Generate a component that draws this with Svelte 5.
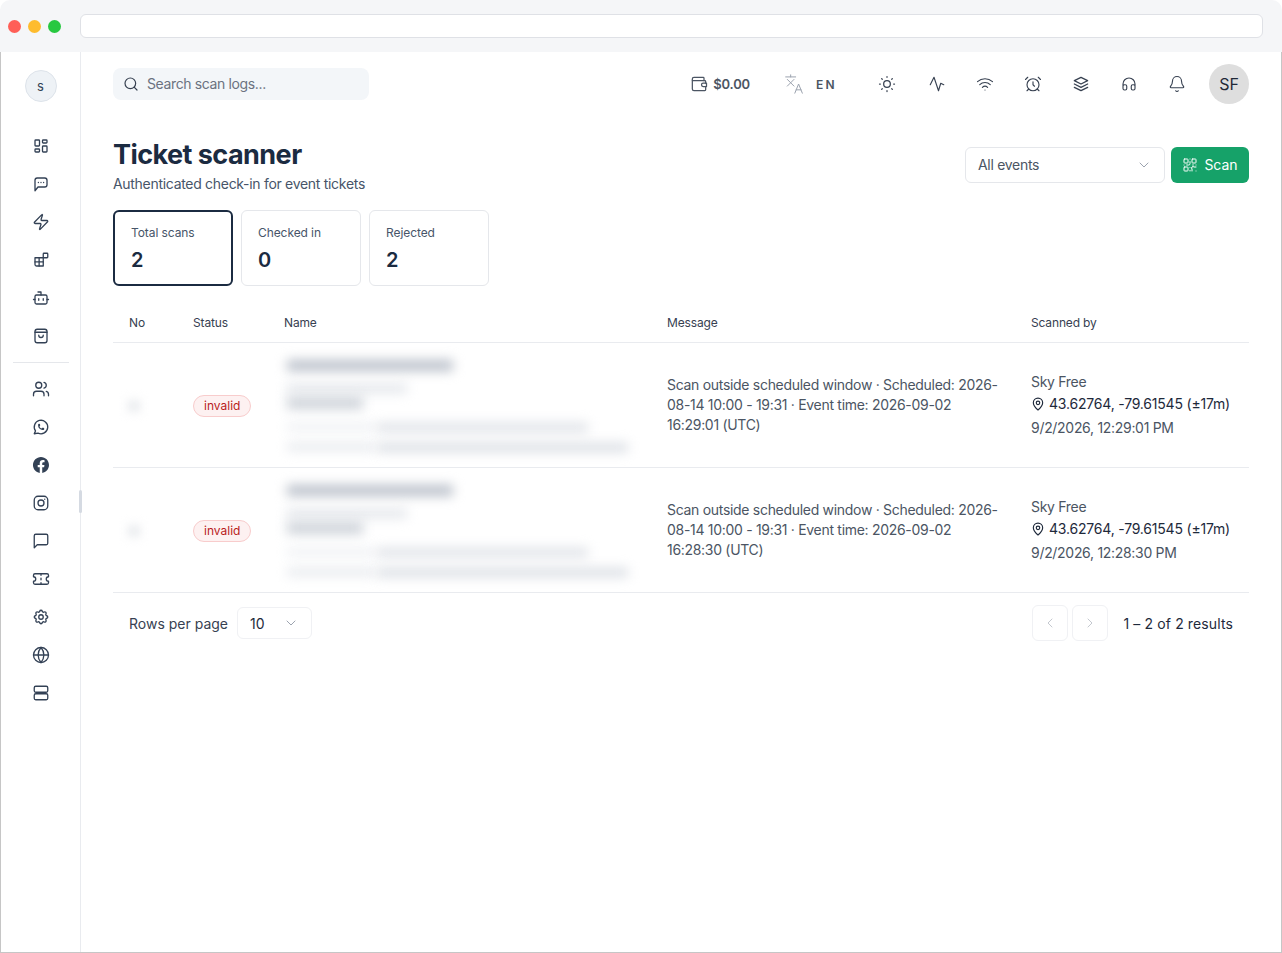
<script>
  const P = {
    dash: '<rect x="4" y="4" width="6" height="8" rx="1"/><rect x="4" y="16" width="6" height="4" rx="1"/><rect x="14" y="12" width="6" height="8" rx="1"/><rect x="14" y="4" width="6" height="4" rx="1"/>',
    chat: '<path d="M4 21V7a3 3 0 0 1 3-3h10a3 3 0 0 1 3 3v6a3 3 0 0 1-3 3H8z"/><path d="M8.5 10h.01M12 10h.01M15.5 10h.01"/>',
    zap: '<path d="M4 14a1 1 0 0 1-.78-1.63l9.9-10.2a.5.5 0 0 1 .86.46l-1.92 6.02A1 1 0 0 0 13 10h7a1 1 0 0 1 .78 1.63l-9.9 10.2a.5.5 0 0 1-.86-.46l1.92-6.02A1 1 0 0 0 11 14z"/>',
    apps: '<path d="M4 9h11v11H6a2 2 0 0 1-2-2z"/><path d="M9.5 9v11M4 14.5h11"/><rect x="15" y="3" width="6" height="6" rx="1"/>',
    bot: '<path d="M12 8V4H8"/><rect x="4" y="8" width="16" height="12" rx="2"/><path d="M2 14h2M20 14h2M15 13v2M9 13v2"/>',
    bag: '<rect x="4" y="3" width="16" height="18" rx="3"/><path d="M4 7h16M9 11a3 3 0 0 0 6 0"/>',
    users: '<path d="M16 21v-2a4 4 0 0 0-4-4H6a4 4 0 0 0-4 4v2"/><circle cx="9" cy="7" r="4"/><path d="M22 21v-2a4 4 0 0 0-3-3.87"/><path d="M16 3.13a4 4 0 0 1 0 7.75"/>',
    wa: '<path d="M3 21l1.65-3.8a9 9 0 1 1 3.4 2.9L3 21"/><path d="M9 10a.5.5 0 0 0 1 0V9a.5.5 0 0 0-1 0v1a5 5 0 0 0 5 5h1a.5.5 0 0 0 0-1h-1a.5.5 0 0 0 0 1"/>',
    fb: '<g transform="translate(1.3 1.3) scale(.89)"><path fill="currentColor" stroke="none" d="M24 12.07C24 5.41 18.63 0 12 0S0 5.4 0 12.07C0 18.1 4.39 23.09 10.13 24v-8.44H7.08v-3.49h3.04V9.41c0-3.02 1.8-4.7 4.54-4.7 1.31 0 2.68.24 2.68.24v2.97h-1.5c-1.5 0-1.96.93-1.96 1.89v2.26h3.32l-.53 3.5h-2.8V24C19.62 23.1 24 18.1 24 12.07"/></g>',
    ig: '<rect x="3" y="3" width="18" height="18" rx="5"/><circle cx="12" cy="12" r="4"/><path d="M17 7h.01"/>',
    msg: '<path d="M21 15a2 2 0 0 1-2 2H7l-4 4V5a2 2 0 0 1 2-2h14a2 2 0 0 1 2 2z"/>',
    ticket: '<path d="M2 9a3 3 0 0 1 0 6v2a2 2 0 0 0 2 2h16a2 2 0 0 0 2-2v-2a3 3 0 0 1 0-6V7a2 2 0 0 0-2-2H4a2 2 0 0 0-2 2Z"/><path d="M12 5v2M12 11v2M12 17v2"/>',
    gear: '<path d="M10.325 4.317c.426-1.756 2.924-1.756 3.35 0a1.724 1.724 0 0 0 2.573 1.066c1.543-.94 3.31.826 2.37 2.37a1.724 1.724 0 0 0 1.065 2.572c1.756.426 1.756 2.924 0 3.35a1.724 1.724 0 0 0-1.066 2.573c.94 1.543-.826 3.31-2.37 2.37a1.724 1.724 0 0 0-2.572 1.065c-.426 1.756-2.924 1.756-3.35 0a1.724 1.724 0 0 0-2.573-1.066c-1.543.94-3.31-.826-2.37-2.37a1.724 1.724 0 0 0-1.065-2.572c-1.756-.426-1.756-2.924 0-3.35a1.724 1.724 0 0 0 1.066-2.573c-.94-1.543.826-3.31 2.37-2.37 1 .608 2.296.07 2.572-1.065z"/><circle cx="12" cy="12" r="3"/>',
    globe: '<circle cx="12" cy="12" r="10"/><path d="M2 12h20"/><path d="M12 2a15 15 0 0 1 0 20 15 15 0 0 1 0-20"/>',
    server: '<rect x="3" y="3" width="18" height="8" rx="2"/><rect x="3" y="13" width="18" height="8" rx="2"/>',
    search: '<circle cx="11" cy="11" r="8"/><path d="m21 21-4.3-4.3"/>',
    wallet: '<path d="M18 8V5a1 1 0 0 0-1-1H6a2 2 0 0 0-2 2v12a2 2 0 0 0 2 2h13a1 1 0 0 0 1-1v-3"/><path d="M4 7.5A1 1 0 0 0 5 8h14a1 1 0 0 1 1 1v2"/><path d="M21 11h-4a2 2 0 0 0 0 4h4z"/>',
    lang: '<path d="M2 3.5h12M8 1v2.5M4 6.5l8 8M12 6.5l-8 8"/><path d="M13 23l4.5-11 4.5 11M14.6 19h5.8"/>',
    sun: '<circle cx="12" cy="12" r="4"/><path d="M3 12h1M12 3v1M20 12h1M12 20v1M5.6 5.6l.7.7M18.4 5.6l-.7.7M17.7 17.7l.7.7M6.3 17.7l-.7.7"/>',
    pulse: '<path d="M3 13 8 3l6 18 3-10 4 2"/>',
    wifi: '<path d="M12 20h.01M2 8.82a15 15 0 0 1 20 0M5 12.86a10 10 0 0 1 14 0M8.5 16.43a5 5 0 0 1 7 0"/>',
    alarm: '<circle cx="12" cy="13" r="8"/><path d="M12 9v4l2 2M5 3 2 6M22 6l-3-3M6.38 18.7 4 21M17.64 18.67 20 21"/>',
    layers: '<path d="M12 4 4 8l8 4 8-4-8-4M4 12l8 4 8-4M4 16l8 4 8-4"/>',
    head: '<path d="M4 15a2 2 0 0 1 2-2h1a2 2 0 0 1 2 2v3a2 2 0 0 1-2 2H6a2 2 0 0 1-2-2zM15 15a2 2 0 0 1 2-2h1a2 2 0 0 1 2 2v3a2 2 0 0 1-2 2h-1a2 2 0 0 1-2-2zM4 15v-3a8 8 0 0 1 16 0v3"/>',
    bell: '<path d="M10.268 21a2 2 0 0 0 3.464 0M3.262 15.326A1 1 0 0 0 4 17h16a1 1 0 0 0 .74-1.673C19.41 13.956 18 12.499 18 8A6 6 0 0 0 6 8c0 4.499-1.411 5.956-2.738 7.326"/>',
    chev: '<path d="m6 9 6 6 6-6"/>',
    left: '<path d="m15 18-6-6 6-6"/>',
    right: '<path d="m9 18 6-6-6-6"/>',
    qr: '<rect x="3" y="3" width="6" height="6" rx="1"/><rect x="15" y="3" width="6" height="6" rx="1"/><rect x="3" y="15" width="6" height="6" rx="1"/><path d="M21 15h-3a2 2 0 0 0-3 3v3M21 21v.01M12 7v3a2 2 0 0 1-2 2H7M3 12h.01M12 3h.01M12 16v.01M16 12h1M21 12v.01M12 21v-1"/>',
    pin: '<path d="M20 10c0 4.993-5.539 10.193-7.399 11.799a1 1 0 0 1-1.202 0C9.539 20.193 4 14.993 4 10a8 8 0 0 1 16 0"/><circle cx="12" cy="10" r="3"/>'
  };
  const navTop = ['dash', 'chat', 'zap', 'apps', 'bot', 'bag'];
  const navBottom = ['users', 'wa', 'fb', 'ig', 'msg', 'ticket', 'gear', 'globe', 'server'];
  const tools = [['sun', 20], ['pulse', 18], ['wifi', 18], ['alarm', 18], ['layers', 20], ['head', 18], ['bell', 18]];
  const stats = [
    { label: 'Total scans', value: 2, active: true },
    { label: 'Checked in', value: 0 },
    { label: 'Rejected', value: 2 }
  ];
  const rows = [
    { time: '16:29:01', date: '9/2/2026, 12:29:01 PM' },
    { time: '16:28:30', date: '9/2/2026, 12:28:30 PM' }
  ];
</script>

{#snippet icon(name, size = 18, sw = 1.6)}
  <svg width={size} height={size} viewBox="0 0 24 24" fill="none" stroke="currentColor" stroke-width={sw} stroke-linecap="round" stroke-linejoin="round">{@html P[name]}</svg>
{/snippet}

<div class="win">
  <header class="chrome">
    <div class="dots"><i class="red"></i><i class="yellow"></i><i class="green"></i></div>
    <div class="address"></div>
  </header>

  <div class="shell">
    <aside class="side">
      <div class="logo">S</div>
      <nav class="nav top">
        {#each navTop as n}<span class="nav-item">{@render icon(n, 18, 1.75)}</span>{/each}
      </nav>
      <div class="divider"></div>
      <nav class="nav">
        {#each navBottom as n}<span class="nav-item">{@render icon(n, 18, 1.75)}</span>{/each}
      </nav>
      <div class="thumb"></div>
    </aside>

    <main class="main">
      <div class="topbar">
        <div class="search">
          <span class="search-icon">{@render icon('search', 16, 1.8)}</span>
          <span class="nudge">Search scan logs...</span>
        </div>
        <div class="top-right">
          <div class="wallet">{@render icon('wallet', 20, 1.5)}<span>$0.00</span></div>
          <div class="lang"><span class="lang-icon">{@render icon('lang', 20, 1.2)}</span><span>EN</span></div>
          <div class="tools">
            {#each tools as [t, s]}<span class="tool">{@render icon(t, s, 1.5)}</span>{/each}
          </div>
          <div class="avatar">SF</div>
        </div>
      </div>

      <div class="head">
        <div>
          <h1>Ticket scanner</h1>
          <p>Authenticated check-in for event tickets</p>
        </div>
        <div class="actions">
          <div class="select events"><span class="nudge">All events</span><span class="chev">{@render icon('chev', 16, 1.5)}</span></div>
          <div class="scan">{@render icon('qr', 16, 1.5)}<span class="nudge">Scan</span></div>
        </div>
      </div>

      <div class="stats">
        {#each stats as s}
          <div class="stat" class:active={s.active}>
            <div class="label">{s.label}</div>
            <div class="value">{s.value}</div>
          </div>
        {/each}
      </div>

      <div class="table">
        <div class="row thead">
          <div>No</div><div>Status</div><div>Name</div><div>Message</div><div>Scanned by</div>
        </div>
        {#each rows as r}
          <div class="row tr">
            <div><div class="blur-no"></div></div>
            <div><span class="badge">invalid</span></div>
            <div class="blurred">
              <div class="b b1"></div>
              <div class="b b2"></div>
              <div class="b b3"></div>
              <div class="b b4"></div>
              <div class="b b4b"></div>
              <div class="b b5"></div>
              <div class="b b5b"></div>
            </div>
            <div class="msg">Scan outside scheduled window · Scheduled: 2026-08-14 10:00 - 19:31 · Event time: 2026-09-02 {r.time} (UTC)</div>
            <div class="by">
              <div>Sky Free</div>
              <div class="geo">{@render icon('pin', 14, 2)}<span>43.62764, -79.61545 (±17m)</span></div>
              <div class="date">{r.date}</div>
            </div>
          </div>
        {/each}
      </div>

      <div class="foot">
        <div class="per">
          <span>Rows per page</span>
          <div class="select small"><span>10</span><span class="chev">{@render icon('chev', 16, 1.5)}</span></div>
        </div>
        <div class="pager">
          <span class="pg">{@render icon('left', 16, 1.5)}</span>
          <span class="pg">{@render icon('right', 16, 1.5)}</span>
          <span class="res">1 – 2 of 2 results</span>
        </div>
      </div>
    </main>
  </div>
</div>

<style>
  :global(body) { margin: 0; background: #fff; }
  * { box-sizing: border-box; }
  .win {
    width: 1282px; height: 953px; display: flex; flex-direction: column;
    font-family: Inter, "Liberation Sans", sans-serif; color: #1e293b; overflow: hidden;
  }
  .chrome {
    height: 52px; flex: none; background: #f5f6f8; display: flex; align-items: center;
    padding: 0 19px 0 8px; border-radius: 10px 10px 0 0;
  }
  .dots { display: flex; gap: 7px; width: 72px; flex: none; }
  .dots i { width: 13px; height: 13px; border-radius: 50%; display: block; }
  .red { background: #ff5f57; } .yellow { background: #febc2e; } .green { background: #28c840; }
  .address { flex: 1; height: 24px; background: #fff; border: 1px solid #dfe1e6; border-radius: 6px; }
  .nudge { padding-bottom: 2px; }

  .shell {
    flex: 1; display: flex; min-height: 0;
    border-left: 1px solid #c6c6c6; border-right: 1px solid #c6c6c6; border-bottom: 1px solid #c6c6c6;
  }
  .side {
    width: 80px; flex: none; border-right: 1px solid #e9ebef; position: relative;
    display: flex; flex-direction: column; align-items: center; padding-top: 18px;
  }
  .logo {
    width: 32px; height: 32px; border-radius: 50%; background: #eef2f6; border: 1px solid #dde3ea;
    display: flex; align-items: center; justify-content: center; font-size: 13px; color: #334155;
    text-transform: lowercase;
  }
  .nav { display: flex; flex-direction: column; gap: 18px; margin-top: 8px; color: #334155; }
  .nav.top { margin-top: 34px; }
  .nav-item { width: 20px; height: 20px; display: flex; align-items: center; justify-content: center; }
  .divider { width: 56px; height: 1px; background: #e5e7eb; margin-top: 16px; margin-bottom: 8px; }
  .thumb { position: absolute; right: -2px; top: 438px; width: 3px; height: 23px; background: #d5dae2; border-radius: 2px; }

  .main { flex: 1; min-width: 0; padding: 16px 32px 0; }
  .topbar { display: flex; justify-content: space-between; align-items: center; height: 32px; }
  .search {
    width: 256px; height: 32px; background: #f3f6f9; border-radius: 8px; display: flex; align-items: center;
    gap: 8px; padding: 0 10px; font-size: 14px; color: #6b7280; letter-spacing: -0.37px;
  }
  .search-icon { display: flex; color: #374151; }
  .top-right { display: flex; align-items: center; }
  .wallet { display: flex; align-items: center; gap: 4px; font-size: 13px; font-weight: 600; color: #4b5563; margin-right: 35px; letter-spacing: -0.15px; }
  .lang { display: flex; align-items: center; gap: 12px; font-size: 12px; font-weight: 600; letter-spacing: 2.2px; color: #4b5563; width: 81px; }
  .lang-icon { display: flex; color: #9ca3af; margin-left: -1px; }
  .tools { display: flex; gap: 28px; margin-right: 22px; color: #374151; margin-left: 11px; }
  .tool { display: flex; width: 20px; justify-content: center; align-items: center; }
  .tool:first-child { margin-right: 2px; }
  .avatar {
    width: 40px; height: 40px; border-radius: 50%; background: #dedede; display: flex; align-items: center;
    justify-content: center; font-size: 16px; color: #1f2937;
  }

  .head { display: flex; justify-content: space-between; align-items: flex-start; margin-top: 38px; height: 56px; }
  h1 { margin: 0 0 2px; font-size: 27px; line-height: 34px; font-weight: 700; color: #1b2b41; letter-spacing: -0.55px; }
  .head p { margin: 0; font-size: 14px; line-height: 20px; color: #475569; letter-spacing: -0.3px; }
  .actions { display: flex; gap: 6px; margin-top: 9px; }
  .select {
    border: 1px solid #e5e7eb; border-radius: 6px; background: #fff; display: flex; align-items: center;
    justify-content: space-between; font-size: 14px; color: #4b5563;
  }
  .events { width: 200px; height: 36px; padding: 0 12px; letter-spacing: -0.3px; }
  .small { width: 75px; height: 32px; padding: 0 12px; border-color: #f0f1f4; color: #1e293b; }
  .chev { display: flex; color: #9ca3af; }
  .scan {
    width: 78px; height: 36px; background: #16a269; color: #fff; border-radius: 6px; display: flex;
    align-items: center; justify-content: center; gap: 6px; font-size: 14px;
  }

  .stats { display: flex; gap: 8px; margin-top: 16px; }
  .stat { width: 120px; height: 76px; border: 1px solid #e5e7eb; border-radius: 6px; padding: 14px 16px; }
  .stat.active { border: 2px solid #1b2b41; padding: 13px 16px; }
  .label { font-size: 12px; line-height: 16px; color: #475569; letter-spacing: -0.08px; }
  .value { font-size: 20px; line-height: 24px; font-weight: 600; color: #1b2b41; margin-top: 7px; }

  .table { margin-top: 17px; }
  .row { display: grid; grid-template-columns: 64px 91px 383px 364px 234px; border-bottom: 1px solid #e9ebef; }
  .row > div { padding: 0 16px; }
  .thead { height: 40px; align-items: center; font-size: 12px; color: #374151; letter-spacing: -0.15px; }
  .tr { height: 125px; align-items: center; }
  .blur-no { width: 12px; height: 12px; background: #e9ebee; filter: blur(5px); margin: 0 0 0 -1px; }
  .badge {
    display: inline-block; height: 22px; line-height: 20px; padding: 0 10px; border-radius: 11px;
    border: 1px solid #f8cccc; background: #fdf1f1; color: #b91c1c; font-size: 12px;
  }
  .row > .blurred { padding: 0; height: 125px; position: relative; }
  .b { position: absolute; left: 19px; filter: blur(6px); }
  .b1 { top: 17px; width: 166px; height: 11px; background: #b9bfc9; }
  .b2 { top: 41px; width: 120px; height: 9px; background: #e2e5ea; }
  .b3 { top: 54px; width: 76px; height: 12px; background: #ccd1d8; }
  .b4 { top: 80px; width: 88px; height: 8px; background: #eef0f3; }
  .b4b { top: 80px; left: 109px; width: 211px; height: 9px; background: #dde0e6; }
  .b5 { top: 100px; width: 88px; height: 8px; background: #e6e9ed; }
  .b5b { top: 100px; left: 109px; width: 251px; height: 9px; background: #d9dde3; }
  .msg { font-size: 14px; line-height: 20px; color: #4b5563; letter-spacing: -0.3px; padding-bottom: 2px !important; }
  .by { font-size: 14px; color: #4b5563; line-height: 20px; display: flex; flex-direction: column; gap: 2px; letter-spacing: -0.3px; padding-bottom: 2px !important; }
  .date { margin-top: 2px; }
  .row > .by { padding-right: 0; }
  .geo { display: flex; align-items: center; gap: 4px; color: #1e293b; white-space: nowrap; letter-spacing: -0.2px; }
  .geo svg { flex: none; }

  .foot { display: flex; justify-content: space-between; align-items: center; padding: 12px 16px 0; }
  .per { display: flex; align-items: center; gap: 9px; font-size: 14px; color: #374151; }
  .pager { display: flex; align-items: center; gap: 4px; }
  .pg {
    width: 36px; height: 36px; border: 1px solid #f0f1f4; border-radius: 6px; display: flex; align-items: center;
    justify-content: center; color: #c4c8cf;
  }
  .res { font-size: 14px; color: #1e293b; margin-left: 12px; letter-spacing: 0.12px; }
</style>
